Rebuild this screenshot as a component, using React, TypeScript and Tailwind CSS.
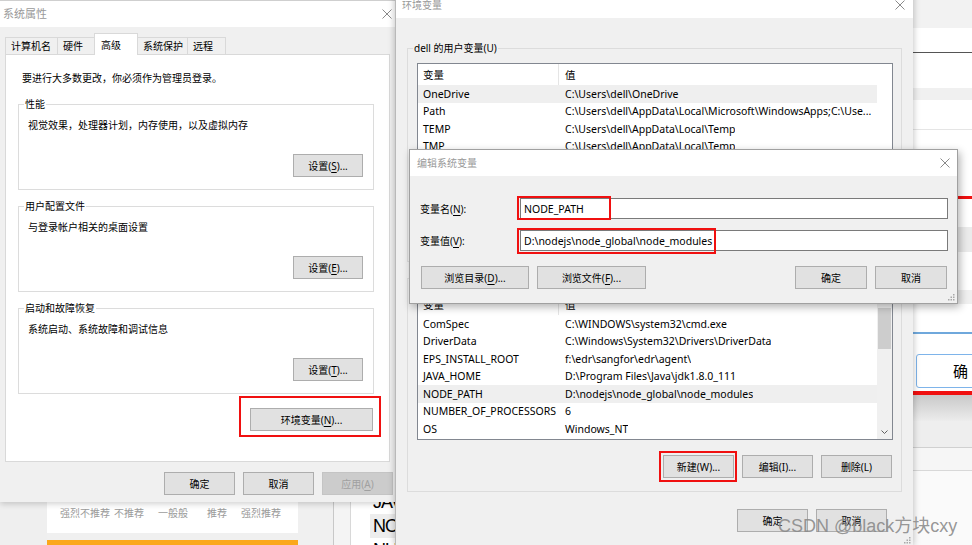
import clsx from 'clsx'
import type { ReactNode } from 'react'

type Kids = { children?: ReactNode; className?: string }

const userVars = [
  { name: 'OneDrive', value: 'C:\\Users\\dell\\OneDrive', sel: true },
  { name: 'Path', value: 'C:\\Users\\dell\\AppData\\Local\\Microsoft\\WindowsApps;C:\\Use...' },
  { name: 'TEMP', value: 'C:\\Users\\dell\\AppData\\Local\\Temp' },
  { name: 'TMP', value: 'C:\\Users\\dell\\AppData\\Local\\Temp' },
]

const sysVars = [
  { name: 'ComSpec', value: 'C:\\WINDOWS\\system32\\cmd.exe' },
  { name: 'DriverData', value: 'C:\\Windows\\System32\\Drivers\\DriverData' },
  { name: 'EPS_INSTALL_ROOT', value: 'f:\\edr\\sangfor\\edr\\agent\\' },
  { name: 'JAVA_HOME', value: 'D:\\Program Files\\Java\\jdk1.8.0_111' },
  { name: 'NODE_PATH', value: 'D:\\nodejs\\node_global\\node_modules', sel: true },
  { name: 'NUMBER_OF_PROCESSORS', value: '6' },
  { name: 'OS', value: 'Windows_NT' },
  { name: 'Path', value: 'C:\\Program Files\\Common Files\\Oracle\\Java\\javapath' },
]

const Close = () => (
  <svg width="10" height="10" viewBox="0 0 10 10">
    <path d="M0.5 0.5L9.5 9.5M9.5 0.5L0.5 9.5" stroke="#8a8a8a" strokeWidth="1" />
  </svg>
)

const Grip = ({ className }: { className?: string }) => (
  <svg width="7" height="7" viewBox="0 0 7 7" className={className}>
    {[[5, 0], [5, 2.5], [2.5, 2.5], [5, 5], [2.5, 5], [0, 5]].map(([x, y], i) => (
      <rect key={i} x={x} y={y} width="1.5" height="1.5" fill="#a8a8a8" />
    ))}
  </svg>
)

const U = ({ children }: Kids) => (
  <span className="underline decoration-[0.5px] underline-offset-[2px]">{children}</span>
)

function Btn({ children, className, disabled }: Kids & { disabled?: boolean }) {
  return (
    <div
      className={clsx(
        'flex h-[23px] shrink-0 items-center justify-center border',
        disabled ? 'border-[#c4c4c4] bg-[#cccccc] text-[#a0a0a0]' : 'border-[#adadad] bg-[#e1e1e1]',
        className
      )}
    >
      {children}
    </div>
  )
}

function Group({ title, children, className }: Kids & { title: ReactNode }) {
  return (
    <fieldset className={clsx('border border-[#dcdcdc]', className)}>
      <legend className="ml-[5px] px-[1px] leading-[14px]">{title}</legend>
      {children}
    </fieldset>
  )
}

function SettingGroup({ title, text, btn, className }: { title: string; text: string; btn: ReactNode; className?: string }) {
  return (
    <Group title={title} className={clsx('w-[356px]', className)}>
      <div className="flex flex-col pb-[12px] pl-[9px] pr-[10px] pt-[7px]">
        <div>{text}</div>
        <Btn className="mt-[22px] w-[70px] self-end">{btn}</Btn>
      </div>
    </Group>
  )
}

function Tab({ children, w, active }: Kids & { w: string; active?: boolean }) {
  return (
    <div
      className={clsx(
        '-ml-px shrink-0 border-x border-t border-[#d9d9d9] first:ml-0',
        w,
        active
          ? 'relative z-10 -mb-px h-[22px] bg-white pl-[6px] pt-[4px] leading-[14px]'
          : 'h-[17px] bg-[#f0f0f0] pl-[5px] leading-[16px]'
      )}
    >
      {children}
    </div>
  )
}

function Scrollbar() {
  return (
    <div className="flex w-[15px] flex-col bg-[#f0f0f0]">
      <div className="flex h-[14px] items-center justify-center">
        <svg width="7" height="4" viewBox="0 0 7 4">
          <path d="M0.5 3.5L3.5 0.5L6.5 3.5" fill="none" stroke="#606060" />
        </svg>
      </div>
      <div className="mx-[1px] h-[41px] bg-[#cdcdcd]" />
      <div className="flex-1" />
      <div className="flex h-[15px] items-center justify-center">
        <svg width="7" height="4" viewBox="0 0 7 4">
          <path d="M0.5 0.5L3.5 3.5L6.5 0.5" fill="none" stroke="#606060" />
        </svg>
      </div>
    </div>
  )
}

function VarList({ rows, className, scroll }: { rows: { name: string; value: string; sel?: boolean }[]; className?: string; scroll?: boolean }) {
  return (
    <div className={clsx('flex w-[476px] shrink-0 overflow-hidden border border-[#828790] bg-white', className)}>
      <div className="flex w-[459px] flex-col overflow-hidden text-[10.5px]">
        <div className="flex h-[21px] shrink-0 items-center">
          <div className="flex h-full w-[141px] items-center border-r border-[#e5e5e5] pl-[5px]">变量</div>
          <div className="pl-[6px]">值</div>
        </div>
        {rows.map((r) => (
          <div key={r.name} className={clsx('flex h-[17.5px] shrink-0 items-center', r.sel && 'bg-[#efefef]')}>
            <div className="w-[141px] shrink-0 overflow-hidden whitespace-nowrap pl-[5px]">{r.name}</div>
            <div className="overflow-hidden whitespace-nowrap pl-[6px]">{r.value}</div>
          </div>
        ))}
      </div>
      {scroll && <Scrollbar />}
    </div>
  )
}

function RedBox({ className }: { className: string }) {
  return <div className={clsx('pointer-events-none absolute border-2 border-[#f01010]', className)} />
}

function SystemProperties() {
  return (
    <div className="absolute left-0 top-0 flex h-[502px] w-[405px] flex-col border-t border-[#cfcfcf] bg-[#f0f0f0] shadow-[0_2px_6px_rgba(0,0,0,0.18)]">
      <div className="flex h-[26px] items-center justify-between bg-white pl-[3px] pr-[13px] text-[11px] text-[#999]">
        <span>系统属性</span>
        <Close />
      </div>
      <div className="flex h-[27px] items-end pl-[5px]">
        <Tab w="w-[53px]">计算机名</Tab>
        <Tab w="w-[38px]">硬件</Tab>
        <Tab w="w-[44px]" active>高级</Tab>
        <Tab w="w-[51px]">系统保护</Tab>
        <Tab w="w-[39px]">远程</Tab>
      </div>
      <div className="ml-[5px] flex h-[408px] w-[385px] flex-col border border-[#d9d9d9] bg-white pl-[12px] pt-[16px]">
        <div className="pl-[4px]">要进行大多数更改，你必须作为管理员登录。</div>
        <SettingGroup
          className="mt-[12px]"
          title="性能"
          text="视觉效果，处理器计划，内存使用，以及虚拟内存"
          btn={<>设置(<U>S</U>)...</>}
        />
        <SettingGroup
          className="mt-[9px]"
          title="用户配置文件"
          text="与登录帐户相关的桌面设置"
          btn={<>设置(<U>E</U>)...</>}
        />
        <SettingGroup
          className="mt-[9px]"
          title="启动和故障恢复"
          text="系统启动、系统故障和调试信息"
          btn={<>设置(<U>T</U>)...</>}
        />
        <Btn className="mr-[16px] mt-[14px] w-[123px] self-end">环境变量(<U>N</U>)...</Btn>
      </div>
      <div className="mt-[10px] flex justify-end gap-[8px] pr-[12px]">
        <Btn className="w-[71px]">确定</Btn>
        <Btn className="w-[71px]">取消</Btn>
        <Btn className="w-[71px]" disabled>应用(<U>A</U>)</Btn>
      </div>
    </div>
  )
}

function EnvVars() {
  return (
    <div className="absolute left-[395px] top-[-8px] flex h-[554px] w-[518px] flex-col border-l border-[#b9b9b9] bg-[#f0f0f0] shadow-[0_0_7px_rgba(0,0,0,0.28)]">
      <div className="flex h-[26px] shrink-0 items-center justify-between bg-white pl-[6px] pr-[8px] text-[#999]">
        <span>环境变量</span>
        <Close />
      </div>
      <div className="flex flex-col pl-[11px] pt-[23px]">
        <Group title="dell 的用户变量(U)" className="w-[495px]">
          <div className="flex flex-col pb-[12px] pl-[9px] pt-[8px]">
            <VarList rows={userVars} className="h-[153px]" />
            <div className="mt-[10px] flex justify-end gap-[8px] pr-[9px]">
              <Btn className="w-[71px]">新建(N)...</Btn>
              <Btn className="w-[71px]">编辑(E)...</Btn>
              <Btn className="w-[71px]">删除(D)</Btn>
            </div>
          </div>
        </Group>
        <Group title="系统变量(S)" className="mt-[9px] w-[495px]">
          <div className="flex flex-col pb-[13px] pl-[9px] pt-[8px]">
            <VarList rows={sysVars} className="h-[147px]" scroll />
            <div className="mt-[15px] flex justify-end gap-[8px] pr-[9px]">
              <Btn className="w-[71px]">新建(W)...</Btn>
              <Btn className="w-[71px]">编辑(I)...</Btn>
              <Btn className="w-[71px]">删除(L)</Btn>
            </div>
          </div>
        </Group>
      </div>
      <div className="mt-[17px] flex justify-end gap-[8px] pr-[26px]">
        <Btn className="w-[71px]">确定</Btn>
        <Btn className="w-[71px]">取消</Btn>
      </div>
      <Grip className="absolute bottom-[2px] right-[2px]" />
    </div>
  )
}

function EditVar() {
  return (
    <div className="absolute left-[409px] top-[149px] flex h-[155px] w-[549px] flex-col border border-[#a0a0a0] bg-[#f0f0f0] shadow-[2px_3px_8px_rgba(0,0,0,0.3)]">
      <div className="flex h-[26px] items-center justify-between bg-white pl-[7px] pr-[7px] text-[#999]">
        <span>编辑系统变量</span>
        <Close />
      </div>
      <div className="flex flex-col pl-[10px] pr-[9px] pt-[22px]">
        <div className="flex h-[21px] items-center">
          <div className="w-[100px]">变量名(<U>N</U>):</div>
          <div className="flex h-full flex-1 items-center border border-[#7a7a7a] bg-white pl-[3px] text-[10.5px]">NODE_PATH</div>
        </div>
        <div className="mt-[11px] flex h-[21px] items-center">
          <div className="w-[100px]">变量值(<U>V</U>):</div>
          <div className="flex h-full flex-1 items-center border border-[#7a7a7a] bg-white pl-[3px] text-[10.5px]">
            D:\nodejs\node_global\node_modules
          </div>
        </div>
        <div className="mt-[15px] flex gap-[8px] pl-[1px] pr-[1px]">
          <Btn className="w-[108px]">浏览目录(<U>D</U>)...</Btn>
          <Btn className="w-[109px]">浏览文件(<U>F</U>)...</Btn>
          <div className="flex-1" />
          <Btn className="w-[72px]">确定</Btn>
          <Btn className="w-[72px]">取消</Btn>
        </div>
      </div>
      <Grip className="absolute bottom-[2px] right-[2px]" />
    </div>
  )
}

function BackdropBottom() {
  return (
    <div className="absolute left-0 top-[470px] flex h-[75px] w-[395px]">
      <div className="w-[47px] bg-[#efefef]" />
      <div className="flex w-[251px] flex-col">
        <div className="flex h-[63px] items-end bg-white pb-[13px] pl-[16px] text-[#9a9a9a]">
          {['强烈不推荐', '不推荐', '一般般', '推荐', '强烈推荐'].map((t) => (
            <div key={t} className="flex w-[44px] justify-center whitespace-nowrap">{t}</div>
          ))}
        </div>
        <div className="h-[7px] bg-[#f0f0f0]" />
        <div className="h-[5px] bg-[#fba81c]" />
      </div>
      <div className="w-[35px] bg-[#f0f0f0]" />
      <div className="w-px bg-[#c8c8c8]" />
      <div className="w-[16px] bg-[#f4f4f4]" />
      <div className="w-px bg-[#d8d8d8]" />
      <div className="w-[19px] bg-white" />
      <div className="flex w-[25px] flex-col overflow-hidden bg-white pt-[20px] font-['Liberation_Sans',sans-serif] text-[18px] leading-[24px] tracking-[-1px]">
        <div className="whitespace-nowrap pl-[3px]">JAVA_HOME</div>
        <div className="whitespace-nowrap bg-[#ededed] pl-[3px]">NODE_PATH</div>
        <div className="whitespace-nowrap pl-[3px]">NUMBER</div>
      </div>
    </div>
  )
}

function BackdropRight() {
  return (
    <div className="absolute left-[913px] top-0 flex h-[545px] w-[59px] flex-col bg-white">
      <div className="h-[28px] bg-[#f2f2f2]" />
      <div className="h-[24px]" />
      <div className="h-px bg-[#555]" />
      <div className="h-[35px]" />
      <div className="h-[12px] bg-[#f0f0f0]" />
      <div className="h-[29px]" />
      <div className="h-px bg-[#e5e5e5]" />
      <div className="h-[66px]" />
      <div className="h-[3px] bg-[#f01010]" />
      <div className="h-[28px]" />
      <div className="h-[25px] bg-[#ebebeb]" />
      <div className="h-[38px]" />
      <div className="h-[14px] bg-[#f0f0f0]" />
      <div className="h-[28px]" />
      <div className="h-[2px] bg-[#6fa8dc]" />
      <div className="h-[20px]" />
      <div className="ml-[3px] flex h-[34px] w-[80px] items-center rounded-[3px] border border-[#7eb4ea] pl-[36px] text-[15px]">
        确
      </div>
      <div className="h-[3px]" />
      <div className="h-[4px] bg-[#f01010]" />
      <div className="h-[26px] bg-gradient-to-b from-[#c9c9c9] to-[#ececec]" />
      <div className="h-[26px] bg-[#eeeeee]" />
      <div className="h-px bg-[#d0d0d0]" />
      <div className="h-[22px] bg-[#f6f6f6]" />
      <div className="h-px bg-[#d8d8d8]" />
      <div className="flex-1 bg-[#fafafa]" />
    </div>
  )
}

export default function App() {
  return (
    <div className="relative h-[545px] w-[972px] overflow-hidden bg-[#f0f0f0] font-['Noto_Sans','Noto_Sans_CJK_SC',sans-serif] text-[10px] leading-[14px] text-black">
      <BackdropBottom />
      <BackdropRight />
      <SystemProperties />
      <EnvVars />
      <EditVar />

      <RedBox className="left-[239px] top-[396px] h-[41px] w-[142px]" />
      <RedBox className="left-[517px] top-[196px] h-[24px] w-[94px]" />
      <RedBox className="left-[517px] top-[228px] h-[26px] w-[199px]" />
      <RedBox className="left-[659px] top-[451px] h-[31px] w-[78px]" />

      <div className="pointer-events-none absolute left-[778px] top-[513px] whitespace-nowrap font-['Liberation_Sans','Noto_Sans_CJK_SC',sans-serif] text-[18px] leading-[26px] text-[#8a8a8a]/90">
        CSDN @black方块cxy
      </div>
    </div>
  )
}
